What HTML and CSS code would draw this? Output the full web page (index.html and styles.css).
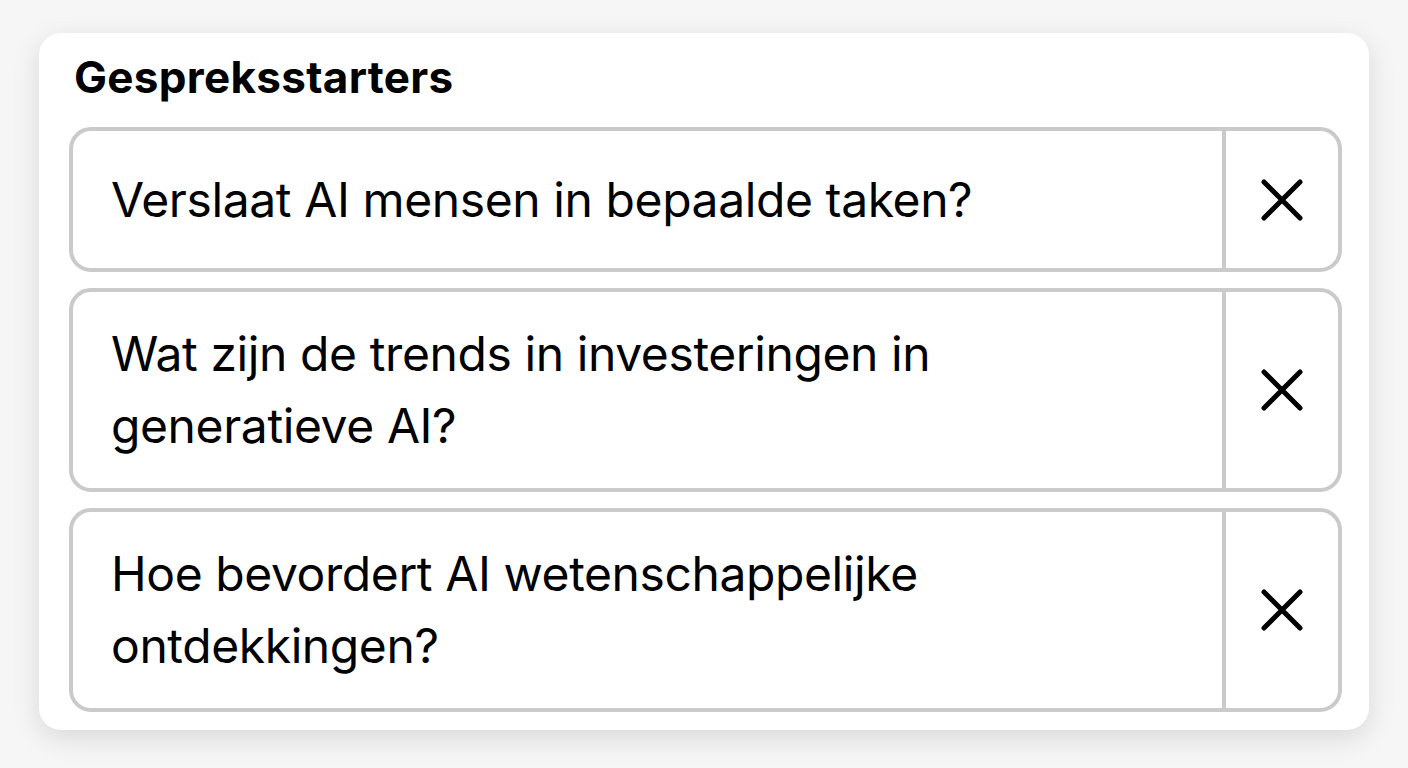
FILE: index.html
```html
<!DOCTYPE html>
<html lang="nl">
  <head>
    <meta charset="UTF-8" />
    <meta name="viewport" content="width=device-width, initial-scale=1.0" />
    <title>Gespreksstarters</title>
    <link rel="stylesheet" href="styles.css">
  </head>
  <body>
    <div class="card">
      <h2 class="card-title">Gespreksstarters</h2>
      <ul class="starters">
        <li class="starter">
          <span class="starter-text">Verslaat AI mensen in bepaalde taken?</span>
          <button type="button" class="starter-remove" aria-label="Verwijderen">
            <svg width="42" height="42" viewBox="0 0 42 42"><path d="M3 3 39 39M39 3 3 39" /></svg>
          </button>
        </li>
        <li class="starter">
          <span class="starter-text">Wat zijn de trends in investeringen in generatieve AI?</span>
          <button type="button" class="starter-remove" aria-label="Verwijderen">
            <svg width="42" height="42" viewBox="0 0 42 42"><path d="M3 3 39 39M39 3 3 39" /></svg>
          </button>
        </li>
        <li class="starter">
          <span class="starter-text">Hoe bevordert AI wetenschappelijke ontdekkingen?</span>
          <button type="button" class="starter-remove" aria-label="Verwijderen">
            <svg width="42" height="42" viewBox="0 0 42 42"><path d="M3 3 39 39M39 3 3 39" /></svg>
          </button>
        </li>
      </ul>
    </div>
  </body>
</html>
```

FILE: styles.css
```css
body {
  margin: 0;
  padding: 33px 39px;
  background-color: #f6f6f6;
  font-family: Inter, "Liberation Sans", Arial, sans-serif;
  color: #000;
}

.card {
  background-color: #ffffff;
  border-radius: 22px;
  box-shadow: 0 8px 28px rgba(0, 0, 0, 0.12);
  padding: 19px 27px 18px 30px;
}

.card-title {
  margin: 0 0 25px 5px;
  font-size: 44px;
  line-height: 50px;
  font-weight: 700;
  letter-spacing: 0.3px;
}

.starters {
  list-style: none;
  margin: 0;
  padding: 0;
  display: flex;
  flex-direction: column;
  gap: 16px;
}

.starter {
  display: flex;
  min-height: 145px;
  box-sizing: border-box;
  border: 4px solid #cacaca;
  border-radius: 22px;
}

.starter-text {
  flex: 1;
  display: flex;
  align-items: center;
  padding: 26px 80px 26px 38px;
  font-size: 48px;
  line-height: 72px;
  letter-spacing: -0.4px;
}

.starter-remove {
  width: 116px;
  box-sizing: border-box;
  flex-shrink: 0;
  display: flex;
  align-items: center;
  justify-content: center;
  background: none;
  border: 0;
  border-left: 4px solid #cacaca;
  padding: 0;
  cursor: pointer;
}

.starter-remove svg path {
  fill: none;
  stroke: #000;
  stroke-width: 5;
  stroke-linecap: round;
}
```
